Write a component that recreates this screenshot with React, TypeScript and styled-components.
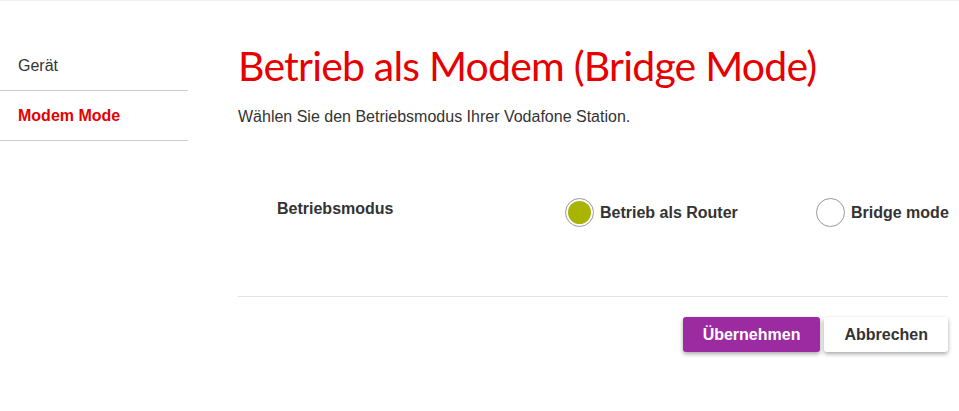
import React, { useState } from "react";
import styled, { createGlobalStyle } from "styled-components";

const GlobalStyle = createGlobalStyle`
  html, body {
    margin: 0;
    padding: 0;
    background: #ffffff;
  }
  body {
    font-family: "Liberation Sans", Arial, sans-serif;
    color: #333333;
  }
`;

const Page = styled.div`
  display: flex;
  width: 959px;
  height: 411px;
  box-sizing: border-box;
  border-top: 1px solid #f2f2f2;
`;

const Sidebar = styled.nav`
  width: 188px;
  flex-shrink: 0;
  padding-top: 40px;
`;

const NavItem = styled.div<{ $active?: boolean }>`
  display: flex;
  align-items: center;
  box-sizing: border-box;
  height: 50px;
  padding-left: 18px;
  border-bottom: 1px solid #cccccc;
  font-size: 16px;
  font-weight: ${(p) => (p.$active ? 700 : 400)};
  color: ${(p) => (p.$active ? "#e60000" : "#333333")};
`;

const Main = styled.main`
  width: 710px;
  margin-left: 50px;
  padding-top: 39px;
`;

const Title = styled.h1`
  margin: 0;
  font-family: Lato, "Open Sans", sans-serif;
  font-weight: 400;
  font-size: 41px;
  letter-spacing: -0.8px;
  line-height: 52px;
  color: #e60000;
`;

const Intro = styled.p`
  margin: 16px 0 0;
  font-size: 16px;
  color: #333333;
`;

const FormRow = styled.div`
  display: grid;
  grid-template-columns: 288px 251px auto;
  align-items: center;
  margin-top: 72px;
  padding-left: 39px;
  padding-bottom: 69px;
  border-bottom: 1px solid #e3e3e3;
  white-space: nowrap;
`;

const Label = styled.div`
  font-size: 16px;
  font-weight: 700;
  margin-top: -7px;
`;

const Option = styled.label`
  display: flex;
  align-items: center;
  gap: 6px;
  font-size: 16px;
  font-weight: 700;
  cursor: pointer;
`;

const Circle = styled.span<{ $checked?: boolean }>`
  width: 29px;
  height: 29px;
  box-sizing: border-box;
  border-radius: 50%;
  border: 1px solid #999999;
  padding: 2px;
  background: #ffffff;
  flex-shrink: 0;

  &::after {
    content: "";
    display: block;
    width: 100%;
    height: 100%;
    border-radius: 50%;
    background: ${(p) => (p.$checked ? "#a8b400" : "transparent")};
  }
`;

const Actions = styled.div`
  display: flex;
  justify-content: flex-end;
  gap: 4px;
  margin-top: 20px;
`;

const Button = styled.button<{ $primary?: boolean }>`
  height: 35px;
  padding: 0 20px;
  border: none;
  border-radius: 3px;
  font-family: "Liberation Sans", Arial, sans-serif;
  font-size: 16px;
  font-weight: 700;
  cursor: pointer;
  color: ${(p) => (p.$primary ? "#ffffff" : "#333333")};
  background: ${(p) => (p.$primary ? "#9c2aa0" : "#ffffff")};
  box-shadow: 0 2px 4px rgba(0, 0, 0, 0.35);
`;

export default function App() {
  const [mode, setMode] = useState("router");

  return (
    <>
      <GlobalStyle />
      <Page>
        <Sidebar>
          <NavItem>Gerät</NavItem>
          <NavItem $active>Modem Mode</NavItem>
        </Sidebar>
        <Main>
          <Title>Betrieb als Modem (Bridge Mode)</Title>
          <Intro>Wählen Sie den Betriebsmodus Ihrer Vodafone Station.</Intro>
          <FormRow>
            <Label>Betriebsmodus</Label>
            <Option onClick={() => setMode("router")}>
              <Circle $checked={mode === "router"} />
              Betrieb als Router
            </Option>
            <Option onClick={() => setMode("bridge")}>
              <Circle $checked={mode === "bridge"} />
              Bridge mode
            </Option>
          </FormRow>
          <Actions>
            <Button $primary>Übernehmen</Button>
            <Button>Abbrechen</Button>
          </Actions>
        </Main>
      </Page>
    </>
  );
}
